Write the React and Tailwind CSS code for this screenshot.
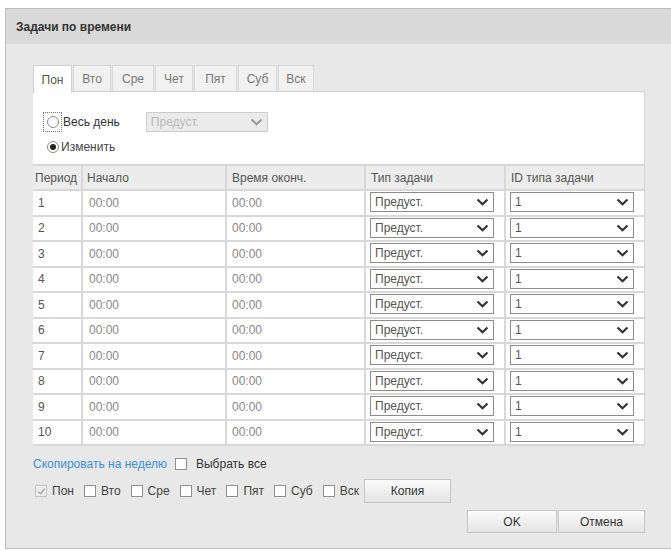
import { Fragment } from 'react';

const DAYS = ['Пон', 'Вто', 'Сре', 'Чет', 'Пят', 'Суб', 'Вск'];
const TAB_W = ['w-[39px]', 'w-[38px]', 'w-[42px]', 'w-[38px]', 'w-[43px]', 'w-[39px]', 'w-[36px]'];
const PERIODS = [1, 2, 3, 4, 5, 6, 7, 8, 9, 10];

function Chevron({ className }) {
    return (
        <svg viewBox="0 0 13 8" className={className}>
            <polyline points="1.5,1.5 6.5,6.2 11.5,1.5" fill="none" stroke="currentColor" strokeWidth="2.2" />
        </svg>
    );
}

function FakeSelect({ value, className = '', disabled = false }) {
    return (
        <div
            className={`flex items-center justify-between h-[20px] border pl-[4px] pr-[4px] text-[12px] ${
                disabled
                    ? 'bg-[#ebebeb] border-[#cdcdcd] text-[#b9b9b9]'
                    : 'bg-white border-[#8c8c8c] text-[#555]'
            } ${className}`}
        >
            <span>{value}</span>
            <Chevron className={`w-[13px] h-[8px] ${disabled ? 'text-[#9a9a9a]' : 'text-[#333]'}`} />
        </div>
    );
}

function Checkbox({ checked = false }) {
    if (checked) {
        return (
            <span className="flex items-center justify-center w-[12px] h-[12px] border border-[#c4c4c4] bg-[#ececec]">
                <svg viewBox="0 0 10 10" className="w-[9px] h-[9px]">
                    <polyline points="1.5,5 4,7.5 8.5,2" fill="none" stroke="#a9a9a9" strokeWidth="1.6" />
                </svg>
            </span>
        );
    }
    return <span className="block w-[12px] h-[12px] border border-[#8f8f8f] bg-white" />;
}

function Radio({ checked = false }) {
    return (
        <span className="flex items-center justify-center w-[12px] h-[12px] rounded-full border border-[#8a8a8a] bg-white">
            {checked && <span className="w-[6px] h-[6px] rounded-full bg-[#222]" />}
        </span>
    );
}

function Button({ children, className = '' }) {
    return (
        <div
            className={`flex items-center justify-center border border-[#c6c6c6] bg-gradient-to-b from-[#fbfbfb] to-[#e4e4e4] text-[12px] text-[#333] ${className}`}
        >
            {children}
        </div>
    );
}

const COLS = 'grid grid-cols-[50px_144px_139px_140px_139px]';
const CELL = 'flex items-center border-r-2 border-[#d8d8d8] last:border-r-0';

export default function App() {
    return (
        <div className="w-[671px] h-[551px] overflow-hidden bg-white pt-[8px] pl-[5px] font-['Liberation_Sans',Arial,sans-serif]">
            <div className="w-[700px] h-[541px] border border-[#bcbcbc] bg-[#e8e8e8] flex flex-col">
                {/* Заголовок */}
                <div className="h-[35px] shrink-0 bg-[#d9d9d9] flex items-center pl-[10px] text-[12px] font-bold text-[#333]">
                    Задачи по времени
                </div>

                <div className="pl-[27px] pt-[21px] w-[639px]">
                    {/* Вкладки */}
                    <div className="flex h-[27px] border-b border-[#cfcfcf]">
                        {DAYS.map((d, i) => (
                            <div
                                key={d}
                                className={`${TAB_W[i]} flex items-center justify-center border-t border-l border-r text-[12px] ${
                                    i === 0
                                        ? 'bg-white border-[#d0d0d0] text-[#555] -mb-px h-[28px]'
                                        : 'bg-[#f1f1f1] border-[#d6d6d6] text-[#777] ml-[1px]'
                                }`}
                            >
                                {d}
                            </div>
                        ))}
                    </div>

                    {/* Панель */}
                    <div className="w-[612px] bg-white border-r border-[#d4d4d4]">
                        <div className="h-[72px] pl-[10px] pt-[19px]">
                            <div className="flex items-center h-[21px]">
                                <span className="flex items-center justify-center w-[19px] h-[20px] border border-dotted border-[#777]">
                                    <Radio />
                                </span>
                                <span className="ml-[1px] text-[12px] text-[#333]">Весь день</span>
                                <FakeSelect value="Предуст." disabled className="ml-[26px] w-[122px]" />
                            </div>
                            <div className="flex items-center h-[13px] mt-[8px] pl-[4px]">
                                <Radio checked />
                                <span className="ml-[2px] text-[12px] text-[#444]">Изменить</span>
                            </div>
                        </div>

                        {/* Таблица */}
                        <div className="border-t-2 border-[#d8d8d8]">
                            <div className={`${COLS} h-[25px] bg-[#ececec] text-[12px] text-[#555] border-b-2 border-[#d8d8d8]`}>
                                <div className={`${CELL} pl-[2px]`}>Период</div>
                                <div className={`${CELL} pl-[4px]`}>Начало</div>
                                <div className={`${CELL} pl-[5px]`}>Время оконч.</div>
                                <div className={`${CELL} pl-[5px]`}>Тип задачи</div>
                                <div className={`${CELL} pl-[5px]`}>ID типа задачи</div>
                            </div>
                            {PERIODS.map((p) => (
                                <div
                                    key={p}
                                    className={`${COLS} h-[25.5px] text-[12px] border-b-2 border-[#d8d8d8]`}
                                >
                                    <div className={`${CELL} pl-[5px] text-[#555]`}>{p}</div>
                                    <div className={`${CELL} pl-[6px] text-[#888]`}>00:00</div>
                                    <div className={`${CELL} pl-[5px] text-[#888]`}>00:00</div>
                                    <div className={`${CELL} items-start pl-[4px] pt-[1px]`}>
                                        <FakeSelect value="Предуст." className="w-[124px]" />
                                    </div>
                                    <div className={`${CELL} items-start pl-[4px] pt-[1px]`}>
                                        <FakeSelect value="1" className="w-[124px]" />
                                    </div>
                                </div>
                            ))}
                        </div>
                    </div>

                    {/* Копирование */}
                    <div className="flex items-center h-[16px] mt-[10px] text-[12px]">
                        <span className="text-[#3d8fd1]">Скопировать на неделю</span>
                        <span className="ml-[8px]"><Checkbox /></span>
                        <span className="ml-[9px] text-[#333]">Выбрать все</span>
                    </div>
                    <div className="flex items-center h-[24px] mt-[7px] text-[12px] text-[#444]">
                        {DAYS.map((d, i) => (
                            <Fragment key={d}>
                                <span className={i === 0 ? 'ml-[2px]' : 'ml-[10px]'}>
                                    <Checkbox checked={i === 0} />
                                </span>
                                <span className="ml-[5px]">{d}</span>
                            </Fragment>
                        ))}
                        <Button className="ml-[5px] w-[87px] h-[24px]">Копия</Button>
                    </div>
                    <div className="flex justify-end h-[23px] mt-[7px] w-[612px]">
                        <Button className="w-[90px] h-[23px]">OK</Button>
                        <Button className="ml-[1px] w-[87px] h-[23px]">Отмена</Button>
                    </div>
                </div>
            </div>
        </div>
    );
}
